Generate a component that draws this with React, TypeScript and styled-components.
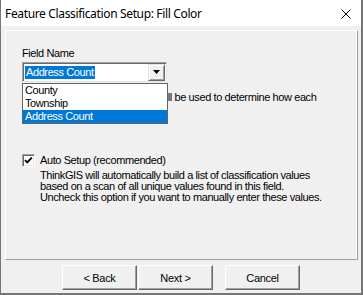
import styled, { createGlobalStyle } from 'styled-components';

const GlobalStyle = createGlobalStyle`
    html, body {
        margin: 0;
        padding: 0;
        background: #f0f0f0;
    }
    * {
        box-sizing: border-box;
    }
`;

const DialogWindow = styled.div`
    display: flex;
    flex-direction: column;
    width: 363px;
    height: 295px;
    background: #f0f0f0;
    border-left: 1px solid #767676;
    border-right: 2px solid #767676;
    border-bottom: 2px solid #767676;
    font-family: "Liberation Sans", Arial, sans-serif;
    font-size: 11px;
    letter-spacing: -0.4px;
    color: #000;
`;

const TitleBar = styled.div`
    display: flex;
    flex-direction: row;
    align-items: center;
    height: 26px;
    background: #ffffff;
    padding: 0 10px 0 4px;
`;

const TitleText = styled.div`
    flex: 1;
    font-family: "Noto Sans", "Open Sans", sans-serif;
    font-size: 12px;
    letter-spacing: -0.35px;
    color: #000;
    line-height: 16px;
    padding-top: 1px;
`;

const CloseButton = styled.div`
    display: flex;
    width: 10px;
    height: 10px;
    margin-top: 1px;
`;

const ClientArea = styled.div`
    flex: 1;
    display: flex;
    flex-direction: column;
    padding: 4px 2px 0 4px;
`;

const Panel = styled.div`
    position: relative;
    width: 353px;
    height: 230px;
    border-top: 1px solid #ffffff;
    border-left: 1px solid #ffffff;
    border-right: 1px solid #a0a0a0;
    border-bottom: 1px solid #a0a0a0;
    box-shadow: inset -1px 0 0 #ffffff;
    padding: 16px 0 0 16px;
`;

const Label = styled.div`
    line-height: 13px;
    height: 13px;
`;

const ComboWrap = styled.div`
    position: relative;
    margin-top: 2px;
    width: 145px;
`;

const ComboBox = styled.div`
    display: flex;
    flex-direction: row;
    align-items: center;
    height: 20px;
    background: #ffffff;
    border: 1px solid;
    border-color: #a0a0a0 #e3e3e3 #e3e3e3 #a0a0a0;
    box-shadow: inset 1px 1px 0 #696969;
    padding: 1px 1px 1px 2px;
`;

const ComboValue = styled.div`
    flex: 1;
    display: flex;
`;

const SelectedText = styled.span`
    background: #0078d7;
    color: #ffffff;
    line-height: 13px;
    padding: 0 1px;
`;

const DropButton = styled.div`
    display: flex;
    align-items: center;
    justify-content: center;
    width: 17px;
    height: 17px;
    background: #f0f0f0;
    border: 1px solid;
    border-color: #e3e3e3 #696969 #696969 #e3e3e3;
    box-shadow: inset 1px 1px 0 #ffffff, inset -1px -1px 0 #a0a0a0;
`;

const DropList = styled.div`
    position: absolute;
    top: 21px;
    left: 0;
    width: 146px;
    display: flex;
    flex-direction: column;
    background: #ffffff;
    border: 1px solid #646464;
    z-index: 2;
`;

const DropItem = styled.div<{ $selected?: boolean }>`
    height: 13px;
    line-height: 13px;
    padding-left: 2px;
    background: ${p => (p.$selected ? '#0078d7' : '#ffffff')};
    color: ${p => (p.$selected ? '#ffffff' : '#000000')};
`;

const HelpText = styled.div`
    margin-top: 9px;
    line-height: 13px;
    width: 330px;
    white-space: nowrap;
`;

const CheckRow = styled.div`
    display: flex;
    flex-direction: row;
    align-items: flex-start;
    gap: 5px;
    margin-top: 37px;
`;

const CheckBox = styled.div`
    flex: none;
    width: 13px;
    height: 13px;
    background: #ffffff;
    border: 1px solid;
    border-color: #a0a0a0 #ffffff #ffffff #a0a0a0;
    box-shadow: inset 1px 1px 0 #696969, inset -1px -1px 0 #e3e3e3;
    display: flex;
`;

const CheckText = styled.div`
    display: flex;
    flex-direction: column;
`;

const CheckLabel = styled.div`
    line-height: 13px;
`;

const Description = styled.div`
    margin-top: 3px;
    line-height: 11px;
`;

const ButtonRow = styled.div`
    display: flex;
    flex-direction: row;
    padding: 5px 0 0 57px;
`;

const DialogButton = styled.button<{ $gap?: number }>`
    width: 75px;
    height: 25px;
    margin-left: ${p => p.$gap ?? 0}px;
    background: #f0f0f0;
    border: 1px solid;
    border-color: #ffffff #696969 #696969 #ffffff;
    box-shadow: inset -1px -1px 0 #a0a0a0;
    font-family: "Liberation Sans", Arial, sans-serif;
    font-size: 11px;
    letter-spacing: -0.3px;
    color: #000;
    padding: 0;
`;

const fieldOptions = ['County', 'Township', 'Address Count'];

export default function App() {
    return (
        <>
            <GlobalStyle />
            <DialogWindow>
                <TitleBar>
                    <TitleText>Feature Classification Setup: Fill Color</TitleText>
                    <CloseButton>
                        <svg width="10" height="10" viewBox="0 0 10 10">
                            <path d="M0.5 0.5 L9.5 9.5 M9.5 0.5 L0.5 9.5" stroke="#000" strokeWidth="1" fill="none" />
                        </svg>
                    </CloseButton>
                </TitleBar>
                <ClientArea>
                    <Panel>
                        <Label>Field Name</Label>
                        <ComboWrap>
                            <ComboBox>
                                <ComboValue>
                                    <SelectedText>Address Count</SelectedText>
                                </ComboValue>
                                <DropButton>
                                    <svg width="7" height="4" viewBox="0 0 7 4">
                                        <path d="M0 0 H7 L3.5 4 Z" fill="#000" />
                                    </svg>
                                </DropButton>
                            </ComboBox>
                            <DropList>
                                {fieldOptions.map(opt => (
                                    <DropItem key={opt} $selected={opt === 'Address Count'}>
                                        {opt}
                                    </DropItem>
                                ))}
                            </DropList>
                        </ComboWrap>
                        <HelpText>
                            The values on a selected field will be used to determine how each
                            <br />
                            feature will be colored.
                        </HelpText>
                        <CheckRow>
                            <CheckBox>
                                <svg width="11" height="11" viewBox="0 0 11 11">
                                    <path d="M2 5 L4.2 7.4 L8.8 2.6" stroke="#000" strokeWidth="1.8" fill="none" />
                                </svg>
                            </CheckBox>
                            <CheckText>
                                <CheckLabel>Auto Setup (recommended)</CheckLabel>
                                <Description>
                                    ThinkGIS will automatically build a list of classification values
                                    <br />
                                    based on a scan of all unique values found in this field.
                                    <br />
                                    Uncheck this option if you want to manually enter these values.
                                </Description>
                            </CheckText>
                        </CheckRow>
                    </Panel>
                    <ButtonRow>
                        <DialogButton>&lt; Back</DialogButton>
                        <DialogButton $gap={1}>Next &gt;</DialogButton>
                        <DialogButton $gap={12}>Cancel</DialogButton>
                    </ButtonRow>
                </ClientArea>
            </DialogWindow>
        </>
    );
}
